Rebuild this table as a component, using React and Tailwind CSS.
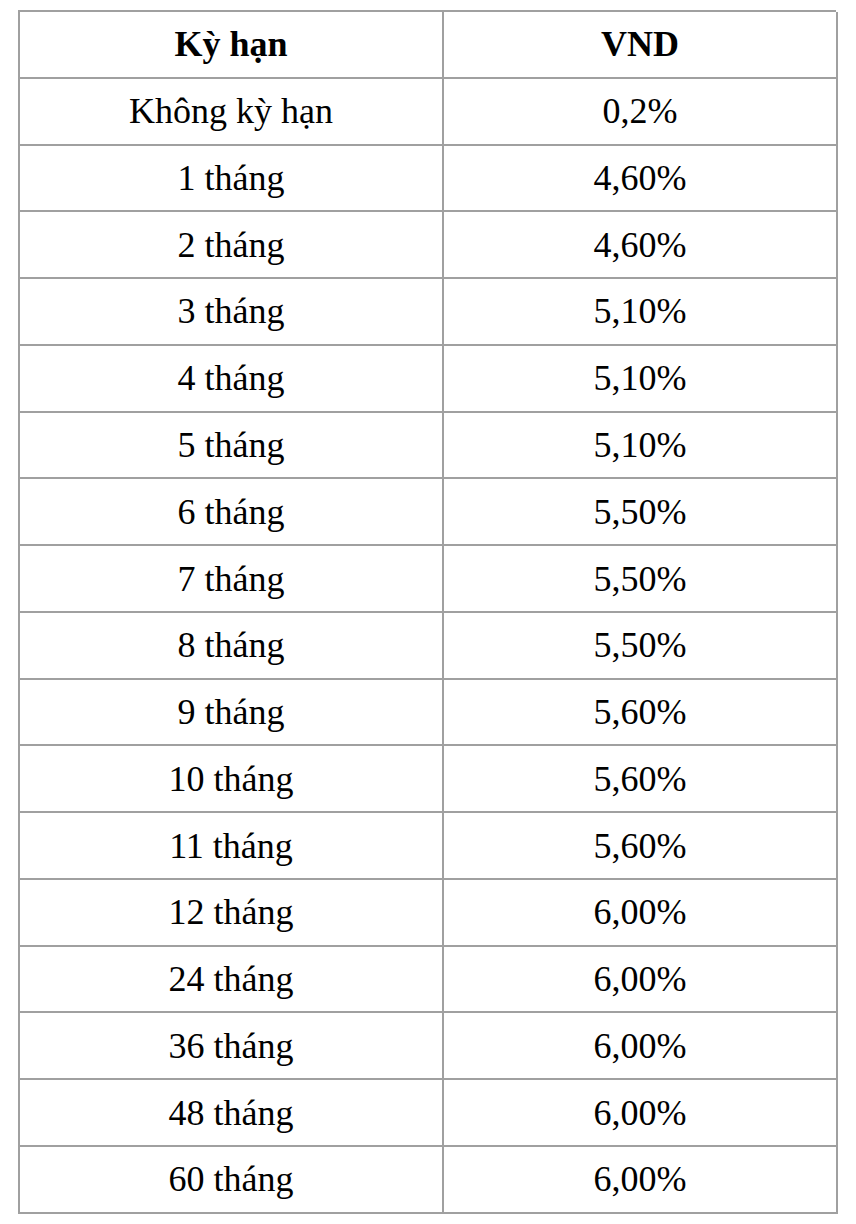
import { Fragment } from "react";

const rows = [
  ["Không kỳ hạn", "0,2%"],
  ["1 tháng", "4,60%"],
  ["2 tháng", "4,60%"],
  ["3 tháng", "5,10%"],
  ["4 tháng", "5,10%"],
  ["5 tháng", "5,10%"],
  ["6 tháng", "5,50%"],
  ["7 tháng", "5,50%"],
  ["8 tháng", "5,50%"],
  ["9 tháng", "5,60%"],
  ["10 tháng", "5,60%"],
  ["11 tháng", "5,60%"],
  ["12 tháng", "6,00%"],
  ["24 tháng", "6,00%"],
  ["36 tháng", "6,00%"],
  ["48 tháng", "6,00%"],
  ["60 tháng", "6,00%"],
];

export default function App() {
  return (
    <div className="min-h-[1224px] w-[856px] bg-white pt-[10px] pl-[18px] text-black font-['Liberation_Serif','Times_New_Roman',serif]">
      <div className="grid w-[818px] grid-cols-[424px_394px] border-l-2 border-t-2 border-[#a0a0a0] text-[36px] leading-none">
        <div className="flex h-[66.78px] items-center justify-center border-b-2 border-r-2 border-[#a0a0a0] font-bold">Kỳ hạn</div>
        <div className="flex h-[66.78px] items-center justify-center border-b-2 border-r-2 border-[#a0a0a0] font-bold">VND</div>
        {rows.map(([a, b]) => (
          <Fragment key={a}>
            <div className="flex h-[66.78px] items-center justify-center border-b-2 border-r-2 border-[#a0a0a0]">{a}</div>
            <div className="flex h-[66.78px] items-center justify-center border-b-2 border-r-2 border-[#a0a0a0]">{b}</div>
          </Fragment>
        ))}
      </div>
    </div>
  );
}
